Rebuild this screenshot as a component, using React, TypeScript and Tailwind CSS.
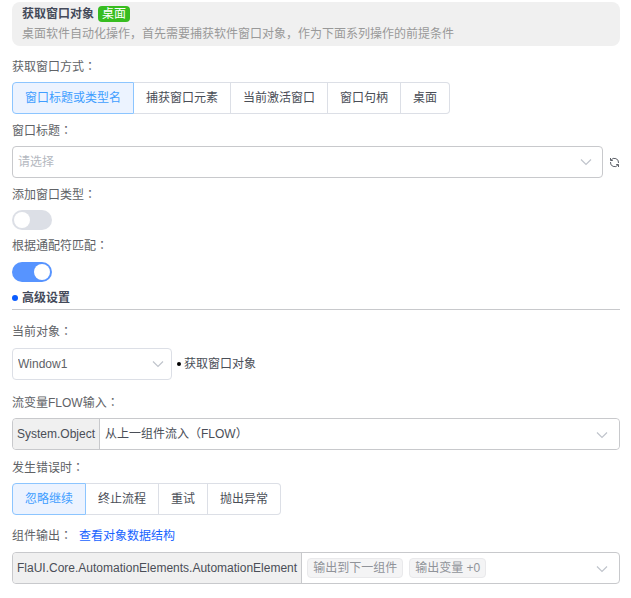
import { useState } from 'react'
import type { ReactNode } from 'react'

interface OptionGroupProps {
  name: string
  labelledBy: string
  options: string[]
}

function FieldLabel({
  id,
  htmlFor,
  className = '',
  children
}: {
  id?: string
  htmlFor?: string
  className?: string
  children: ReactNode
}) {
  return (
    <label
      id={id}
      htmlFor={htmlFor}
      className={`block w-fit leading-4 text-[#606266] ${className}`}
    >
      {children}
      <span className="font-['Noto_Sans_CJK_TC',sans-serif] leading-none">：</span>
    </label>
  )
}

function OptionGroup({ name, labelledBy, options }: OptionGroupProps) {
  const [selected, setSelected] = useState(options[0])

  return (
    <div role="radiogroup" aria-labelledby={labelledBy} className="flex">
      {options.map(option => (
        <label
          key={option}
          className="flex h-8 cursor-pointer items-center border border-l-0 border-[#dcdfe6] px-3 text-[#4a4e57] first:rounded-l first:border-l last:rounded-r has-checked:border-[#8cc5ff] has-checked:bg-[#ecf3ff] has-checked:text-[#409eff]"
        >
          <input
            type="radio"
            name={name}
            value={option}
            checked={selected === option}
            onChange={() => setSelected(option)}
            className="sr-only"
          />
          {option}
        </label>
      ))}
    </div>
  )
}

function Chevron({ className }: { className: string }) {
  return (
    <svg
      viewBox="0 0 12 8"
      fill="none"
      stroke="#c0c4cc"
      strokeWidth="1.2"
      aria-hidden="true"
      className={`pointer-events-none absolute top-3 h-2 w-3 ${className}`}
    >
      <path d="M1 1.5 L6 6.5 L11 1.5" />
    </svg>
  )
}

function Toggle({ id, defaultChecked }: { id: string; defaultChecked?: boolean }) {
  return (
    <input
      id={id}
      type="checkbox"
      role="switch"
      defaultChecked={defaultChecked}
      className="flex h-5 w-10 cursor-pointer appearance-none items-center rounded-full bg-[#dcdfe6] px-0.5 before:size-4 before:rounded-full before:bg-white checked:justify-end checked:bg-[#5794ff]"
    />
  )
}

function OutputTag({ children }: { children: ReactNode }) {
  return (
    <span className="flex h-5 items-center rounded-sm border border-[#e9e9eb] bg-[#f4f4f5] px-[5px] text-[#909399]">
      {children}
    </span>
  )
}

export default function App() {
  return (
    <main className="bg-white pt-0.5 pr-[11px] pb-3 pl-3 font-['Liberation_Sans','Noto_Sans_CJK_SC',sans-serif] text-xs leading-4 text-[#4a4e57]">
      <header className="rounded-lg bg-[#f0f0f0] px-2.5 pt-1 pb-1">
        <div className="flex items-center gap-1">
          <h1 className="font-bold text-[#444a5a]">获取窗口对象</h1>
          <span className="rounded-sm bg-[#37bd20] px-1 text-white">桌面</span>
        </div>
        <p className="pt-1 leading-4 text-[#999999]">
          桌面软件自动化操作，首先需要捕获软件窗口对象，作为下面系列操作的前提条件
        </p>
      </header>

      <FieldLabel id="mode-label" className="mt-[13px] mb-[7px]">
        获取窗口方式
      </FieldLabel>
      <OptionGroup
        name="mode"
        labelledBy="mode-label"
        options={['窗口标题或类型名', '捕获窗口元素', '当前激活窗口', '窗口句柄', '桌面']}
      />

      <FieldLabel htmlFor="window-title" className="mt-[9px] mb-[7px]">
        窗口标题
      </FieldLabel>
      <div className="flex items-center gap-1.5">
        <div className="relative flex-1">
          <select
            id="window-title"
            defaultValue=""
            className="h-8 w-full appearance-none rounded border border-[#c8c9cc] bg-white px-[5px] text-[#b4b8c0]"
          >
            <option value="">请选择</option>
          </select>
          <Chevron className="right-[11px]" />
        </div>
        <button type="button" aria-label="刷新" className="cursor-pointer">
          <svg
            viewBox="0 0 11 11"
            fill="none"
            stroke="#4a4e57"
            strokeWidth="0.9"
            className="size-[11px]"
          >
            <path d="M2 3.2 A4.1 4.1 0 0 1 9.5 6" />
            <path d="M9 7.8 A4.1 4.1 0 0 1 1.5 5" />
            <path d="M1.5 1 V3.5 H3.8" />
            <path d="M9.5 10 V7.5 H7.2" />
          </svg>
        </button>
      </div>

      <FieldLabel htmlFor="add-type" className="mt-[9px] mb-[7px]">
        添加窗口类型
      </FieldLabel>
      <Toggle id="add-type" />

      <FieldLabel htmlFor="wildcard" className="mt-2 mb-2">
        根据通配符匹配
      </FieldLabel>
      <Toggle id="wildcard" defaultChecked />

      <div className="mt-2 flex items-center gap-1 border-b border-[#c8c9cc] pb-[3px]">
        <span className="size-1.5 rounded-full bg-[#0a5cff]" />
        <h2 className="font-bold text-[#444a5a]">高级设置</h2>
      </div>

      <FieldLabel htmlFor="current-object" className="mt-3.5 mb-2">
        当前对象
      </FieldLabel>
      <div className="flex items-center gap-[5px]">
        <div className="relative w-40">
          <select
            id="current-object"
            className="h-8 w-full appearance-none rounded border border-[#dcdfe6] bg-white px-[5px] text-[#606266]"
          >
            <option>Window1</option>
          </select>
          <Chevron className="right-2" />
        </div>
        <div className="flex items-center gap-[3px]">
          <span className="size-1 rounded-full bg-black" />
          <span>获取窗口对象</span>
        </div>
      </div>

      <FieldLabel htmlFor="flow-input" className="mt-[15px] mb-[7px]">
        流变量FLOW输入
      </FieldLabel>
      <div className="flex h-8 rounded border border-[#c8c9cc]">
        <span className="flex items-center rounded-l border-r border-[#c8c9cc] bg-[#f0f0f0] px-1">
          System.Object
        </span>
        <div className="relative flex-1">
          <select
            id="flow-input"
            className="h-full w-full appearance-none rounded-r bg-white px-[5px]"
          >
            <option>从上一组件流入（FLOW）</option>
          </select>
          <Chevron className="right-[11px]" />
        </div>
      </div>

      <FieldLabel id="error-label" className="mt-2.5 mb-[7px]">
        发生错误时
      </FieldLabel>
      <OptionGroup
        name="on-error"
        labelledBy="error-label"
        options={['忽略继续', '终止流程', '重试', '抛出异常']}
      />

      <div className="mt-[13px] mb-2 flex gap-[7px]">
        <FieldLabel htmlFor="output">组件输出</FieldLabel>
        <a href="#structure" className="text-[#1763ff]">
          查看对象数据结构
        </a>
      </div>
      <div className="flex h-8 rounded border border-[#c8c9cc]">
        <span className="flex items-center rounded-l border-r border-[#c8c9cc] bg-[#f0f0f0] px-1">
          FlaUI.Core.AutomationElements.AutomationElement
        </span>
        <button
          id="output"
          type="button"
          aria-haspopup="listbox"
          className="relative flex flex-1 cursor-pointer items-center gap-1.5 px-[5px]"
        >
          <OutputTag>输出到下一组件</OutputTag>
          <OutputTag>输出变量 +0</OutputTag>
          <Chevron className="right-[11px]" />
        </button>
      </div>
    </main>
  )
}
